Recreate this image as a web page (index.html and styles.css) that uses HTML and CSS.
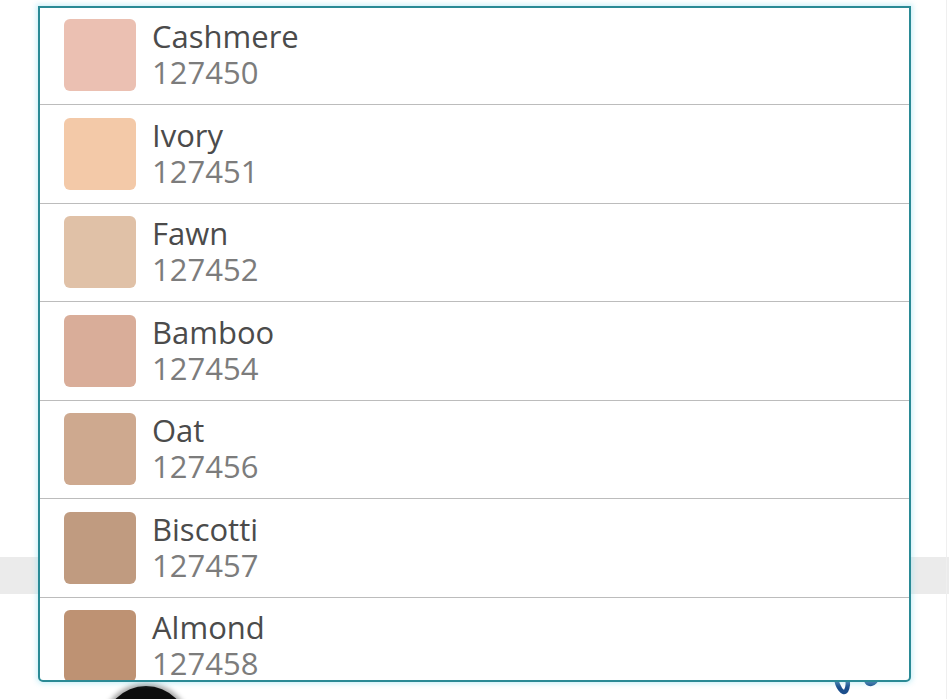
FILE: index.html
```html
<!DOCTYPE html>
<html lang="en">
<head>
<meta charset="utf-8">
<title>Colour picker</title>
<link rel="stylesheet" href="styles.css">
</head>
<body>
<div class="page">
  <div class="edge"></div>
  <div class="band"></div>
  <div class="footer">
    <div class="avatar"></div>
    <svg class="logo" width="60" height="30" viewBox="0 0 60 30">
      <path d="M6 6 C 7 16, 13 24, 16 20 C 19 15, 18 9, 17 4" fill="none" stroke="#1b4e8c" stroke-width="4.5" stroke-linecap="round"/>
      <path d="M36 8 C 38 15, 45 14, 47 6" fill="none" stroke="#1b4e8c" stroke-width="5" stroke-linecap="round"/>
    </svg>
  </div>

  <div class="dropdown">
    <ul class="list">
      <li class="item"><span class="swatch" style="background:#ebc0b2"></span><span class="text"><span class="name">Cashmere</span><span class="code">127450</span></span></li>
      <li class="item"><span class="swatch" style="background:#f3c9a8"></span><span class="text"><span class="name">Ivory</span><span class="code">127451</span></span></li>
      <li class="item"><span class="swatch" style="background:#e0c1a7"></span><span class="text"><span class="name">Fawn</span><span class="code">127452</span></span></li>
      <li class="item"><span class="swatch" style="background:#d9ad99"></span><span class="text"><span class="name">Bamboo</span><span class="code">127454</span></span></li>
      <li class="item"><span class="swatch" style="background:#cea98f"></span><span class="text"><span class="name">Oat</span><span class="code">127456</span></span></li>
      <li class="item"><span class="swatch" style="background:#c09b80"></span><span class="text"><span class="name">Biscotti</span><span class="code">127457</span></span></li>
      <li class="item"><span class="swatch" style="background:#be9273"></span><span class="text"><span class="name">Almond</span><span class="code">127458</span></span></li>
    </ul>
  </div>
</div>
</body>
</html>
```

FILE: styles.css
```css
html, body {
  margin: 0;
  padding: 0;
  background: #ffffff;
}

.page {
  position: relative;
  width: 949px;
  height: 699px;
  overflow: hidden;
  background: #ffffff;
  font-family: "Open Sans", "Noto Sans", sans-serif;
}

.edge {
  position: absolute;
  top: 0;
  right: 2px;
  width: 1px;
  height: 699px;
  background: #efefef;
}

.band {
  margin-top: 557px;
  height: 37px;
  background: #ebebeb;
}

.footer {
  display: flex;
  align-items: flex-start;
  padding-top: 77px;
}

.avatar {
  margin-left: 104px;
  margin-top: 15px;
  width: 84px;
  height: 84px;
  border-radius: 50%;
  background: #0d0d0d;
  box-shadow: 0 0 5px 3px rgba(0, 0, 0, 0.35);
  flex: none;
}

.logo {
  margin-left: 642px;
  flex: none;
}

.dropdown {
  position: absolute;
  left: 38px;
  top: 6px;
  width: 869px;
  height: 672px;
  border: 2px solid #2a8a95;
  border-radius: 0 0 5px 5px;
  box-shadow: 0 0 5px 2px rgba(150, 225, 240, 0.45);
  background: #ffffff;
  overflow: hidden;
}

.list {
  list-style: none;
  margin: -1.5px 0 0 0;
  padding: 0;
}

.item {
  display: flex;
  align-items: center;
  height: 97.5px;
  border-bottom: 1px solid #bcbcbc;
  padding-left: 24px;
  box-sizing: content-box;
}

.swatch {
  flex: none;
  width: 72px;
  height: 72px;
  border-radius: 6px;
}

.text {
  display: flex;
  flex-direction: column;
  margin-left: 16px;
  margin-top: -2px;
}

.name {
  font-size: 31px;
  line-height: 36px;
  color: #4b4b4b;
}

.code {
  font-size: 31px;
  line-height: 36px;
  color: #7c7c7c;
}
```
